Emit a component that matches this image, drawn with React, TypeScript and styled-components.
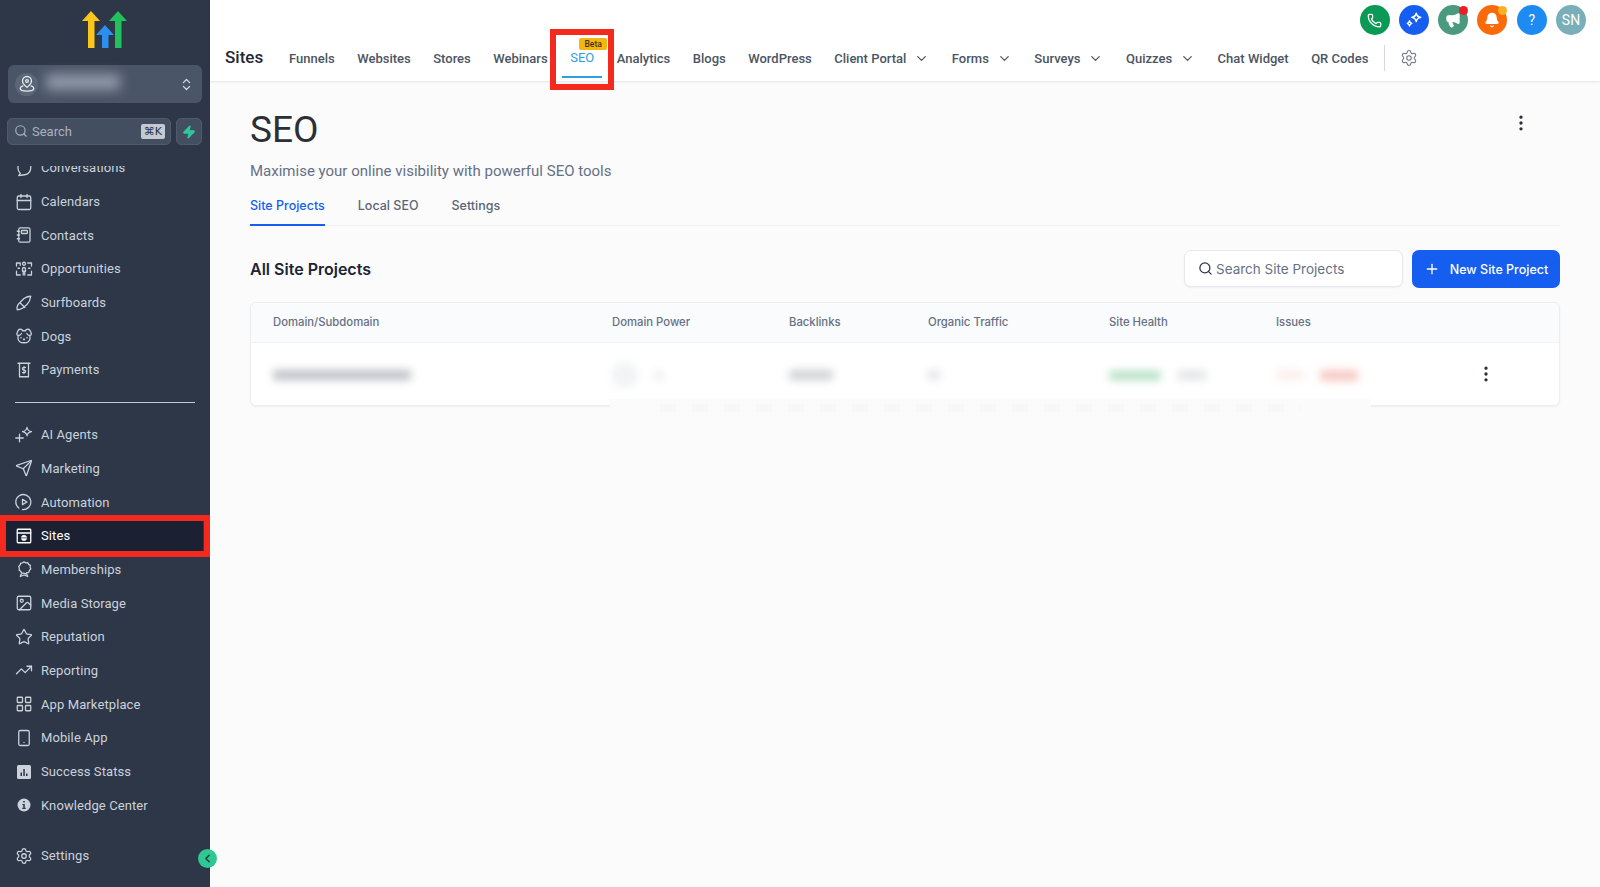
import React from "react";
import styled, { createGlobalStyle } from "styled-components";
import {
  Calendar,
  ChevronDown,
  ChevronLeft,
  ChevronsUpDown,
  EllipsisVertical,
  Dog,
  Image,
  LayoutGrid,
  Megaphone,
  Phone,
  Plus,
  Search as SearchGlyph,
  Send,
  Settings,
  Smartphone,
  Star,
  TrendingUp,
  Bell,
  Zap,
} from "lucide-react";

const GlobalStyle = createGlobalStyle`
  * { box-sizing: border-box; }
  html, body { margin: 0; padding: 0; height: 100%; overflow: hidden; }
  body { font-family: Roboto, "Liberation Sans", sans-serif; background: #fbfbfc; }
`;

const Page = styled.div`
  display: flex;
  width: 1600px;
  height: 887px;
  overflow: hidden;
`;

/* sidebar */
const Sidebar = styled.aside`
  position: relative;
  flex: 0 0 210px;
  display: flex;
  flex-direction: column;
  background: #2d3748;
  color: #cbd2dc;
`;

const LogoWrap = styled.div`
  display: flex;
  justify-content: center;
  padding-top: 11px;
  height: 65px;
`;

const AccountBox = styled.div`
  display: flex;
  align-items: center;
  margin: 0 8px;
  height: 38px;
  padding: 0 7px;
  background: #4a5567;
  border-radius: 6px;
`;

const AccountAvatar = styled.div`
  width: 23px;
  height: 23px;
  flex: none;
  border-radius: 50%;
  background: #5b6677;
  display: flex;
  align-items: center;
  justify-content: center;
  color: #e6e9ee;
`;

const BlurredName = styled.div`
  width: 74px;
  height: 16px;
  margin: 0 0 5px 8px;
  background: #8f98a6;
  filter: blur(6px);
  flex: none;
`;

const AccountArrows = styled.div`
  margin-left: auto;
  margin-right: 1px;
  display: flex;
  color: #d5dae1;
`;

const SearchRow = styled.div`
  display: flex;
  gap: 5px;
  margin: 15px 8px 0 7px;
  height: 27px;
`;

const SearchBox = styled.div`
  flex: 1;
  display: flex;
  align-items: center;
  gap: 4px;
  padding: 0 5px 1px 6px;
  background: #434e60;
  border: 1px solid #4f5a6b;
  border-radius: 5px;
  color: #aab2bf;
  font-size: 13px;
`;

const Kbd = styled.span`
  margin-left: auto;
  background: #c4c9d2;
  color: #2d3748;
  border-radius: 2px;
  padding: 0 3px;
  height: 15px;
  line-height: 15px;
  font-size: 11px;
  font-family: "DejaVu Sans", sans-serif;
`;

const BoltButton = styled.div`
  width: 26px;
  display: flex;
  align-items: center;
  justify-content: center;
  background: #434e60;
  border: 1px solid #4f5a6b;
  border-radius: 5px;
  color: #2fc79a;
`;

const MenuClip = styled.nav`
  flex: 1;
  margin-top: 21px;
  overflow: hidden;
  display: flex;
  flex-direction: column;
`;

const MenuList = styled.div`
  margin-top: -15px;
  flex: 1;
  display: flex;
  flex-direction: column;
`;

const MenuRow = styled.div<{ $active?: boolean }>`
  position: relative;
  display: flex;
  align-items: center;
  flex: none;
  height: 33.7px;
  margin: 0 7px 0 6px;
  padding-left: 9px;
  gap: 8px;
  font-size: 13px;
  letter-spacing: 0.1px;
  color: ${(p) => (p.$active ? "#ffffff" : "#cbd2dc")};
  background: ${(p) => (p.$active ? "#1b2132" : "transparent")};
`;

const MenuIcon = styled.span`
  width: 18px;
  height: 18px;
  flex: none;
  display: flex;
  align-items: center;
  justify-content: center;
`;

const MenuDivider = styled.hr`
  flex: none;
  width: 180px;
  height: 1px;
  margin: 15px 0 15px 15px;
  border: none;
  background: #c3cad4;
`;

const SettingsRow = styled(MenuRow)`
  margin-top: 17px;
`;

const Annotation = styled.span<{ $wide?: boolean }>`
  position: absolute;
  border: ${(p) => (p.$wide ? "6.5px" : "6px")} solid #f32a1d;
  pointer-events: none;
  z-index: 5;
`;

const SitesAnnotation = styled(Annotation)`
  inset: -3.5px -7px -4px -6px;
`;

const SeoAnnotation = styled(Annotation)`
  top: -6px;
  bottom: -9px;
  left: -12px;
  right: -12px;
`;

const CollapseButton = styled.div`
  position: absolute;
  left: 198px;
  top: 849px;
  width: 19px;
  height: 19px;
  border-radius: 50%;
  background: #2fc794;
  color: #24413f;
  display: flex;
  align-items: center;
  justify-content: center;
  z-index: 6;
`;

/* main */
const Main = styled.main`
  flex: 1;
  min-width: 0;
  display: flex;
  flex-direction: column;
`;

const Header = styled.header`
  height: 81px;
  flex: none;
  padding-top: 5px;
  background: #ffffff;
  box-shadow: 0 1px 2px rgba(16, 24, 40, 0.1);
  position: relative;
  z-index: 2;
`;

const TopActions = styled.div`
  display: flex;
  justify-content: flex-end;
  gap: 9.3px;
  height: 30px;
  padding-right: 14px;
`;

const RoundAction = styled.div<{ $bg: string }>`
  position: relative;
  width: 30px;
  height: 30px;
  border-radius: 50%;
  background: ${(p) => p.$bg};
  color: #ffffff;
  display: flex;
  align-items: center;
  justify-content: center;
  font-size: 14px;
`;

const Dot = styled.span<{ $color: string }>`
  position: absolute;
  top: 1px;
  right: 0;
  width: 9px;
  height: 9px;
  border-radius: 50%;
  background: ${(p) => p.$color};
`;

const NavRow = styled.div`
  display: flex;
  align-items: center;
  height: 46px;
  padding-left: 15px;
`;

const NavTitle = styled.div`
  font-size: 17px;
  font-weight: 500;
  color: #1f2937;
  width: 64px;
  flex: none;
  margin-bottom: 2px;
`;

const NavLinks = styled.div`
  display: flex;
  align-items: stretch;
  align-self: stretch;
  gap: 22.5px;
`;

const NavLink = styled.div`
  display: flex;
  align-items: center;
  gap: 8px;
  font-size: 13px;
  font-weight: 500;
  color: #4b5563;
  white-space: nowrap;
`;

const SeoLink = styled(NavLink)`
  position: relative;
  padding: 0 8px 2px;
  margin: 0 -8px;
  color: #2f9fe0;
  font-weight: 400;

  &::after {
    content: "";
    position: absolute;
    left: 0;
    right: 0;
    bottom: 3px;
    height: 2px;
    background: #2f9fe0;
  }
`;

const BetaBadge = styled.span`
  position: absolute;
  top: 3px;
  left: 17px;
  width: 28px;
  height: 12px;
  border-radius: 2px;
  background: #f5b40f;
  color: #3d3415;
  font-size: 8.5px;
  font-weight: 500;
  line-height: 12px;
  text-align: center;
`;

const NavSeparator = styled.div`
  width: 1px;
  height: 26px;
  margin-left: 16px;
  background: #d5d8dd;
`;

const NavGear = styled.div`
  margin-left: 15px;
  color: #6b7280;
  display: flex;
`;

const Content = styled.div`
  flex: 1;
  padding: 0 40px;
  position: relative;
`;

const TitleBlock = styled.div`
  position: relative;
  padding-top: 27px;
`;

const PageTitle = styled.h1`
  margin: 0;
  font-size: 37px;
  line-height: 44px;
  font-weight: 400;
  color: #2b2f36;
`;

const PageMenu = styled.div`
  position: absolute;
  top: 32px;
  right: 29px;
  color: #2b2f36;
  display: flex;
`;

const Subtitle = styled.p`
  margin: 9px 0 0;
  font-size: 15px;
  line-height: 20px;
  color: #667085;
`;

const Tabs = styled.div`
  display: flex;
  gap: 33px;
  margin-top: 8px;
  border-bottom: 1px solid #f0f1f3;
  height: 37px;
`;

const Tab = styled.div<{ $active?: boolean }>`
  height: 37px;
  padding-top: 9px;
  font-family: Inter, sans-serif;
  font-size: 12.5px;
  font-weight: 500;
  color: ${(p) => (p.$active ? "#155eef" : "#5c6675")};
  border-bottom: ${(p) => (p.$active ? "2px solid #155eef" : "none")};
`;

const SectionBar = styled.div`
  display: flex;
  align-items: center;
  justify-content: space-between;
  margin-top: 24px;
  height: 38px;
`;

const SectionTitle = styled.h2`
  margin: 0;
  font-family: Inter, sans-serif;
  font-size: 16px;
  font-weight: 600;
  color: #1d2433;
`;

const SectionActions = styled.div`
  display: flex;
  gap: 9px;
`;

const SearchField = styled.div`
  width: 219px;
  height: 37px;
  display: flex;
  align-items: center;
  gap: 3px;
  padding: 0 13px;
  background: #fff;
  border: 1px solid #e7e9ec;
  border-radius: 7px;
  box-shadow: 0 1px 2px rgba(16, 24, 40, 0.05);
  color: #667085;
  font-family: Inter, sans-serif;
  font-size: 13.5px;
`;

const PrimaryButton = styled.div`
  width: 148px;
  height: 38px;
  display: flex;
  align-items: center;
  justify-content: center;
  gap: 10px;
  background: #155eef;
  border-radius: 7px;
  color: #fff;
  font-family: Inter, sans-serif;
  font-size: 12.5px;
  font-weight: 500;
`;

const TableCard = styled.div`
  position: relative;
  margin-top: 14px;
  background: #fff;
  border: 1px solid #eceef1;
  border-radius: 6px;
  box-shadow: 0 1px 2px rgba(16, 24, 40, 0.05);
`;

const TableGrid = styled.div`
  display: grid;
  grid-template-columns: 339px 177px 139px 181px 167px 1fr;
  align-items: center;
  padding-left: 22px;
`;

const TableHead = styled(TableGrid)`
  height: 40px;
  padding-bottom: 2px;
  background: #f9fbfc;
  border-bottom: 1px solid #f0f1f4;
  border-radius: 6px 6px 0 0;
  font-family: Inter, sans-serif;
  font-size: 11.3px;
  font-weight: 500;
  color: #667085;
`;

const TableRow = styled(TableGrid)`
  height: 62px;
  padding-top: 2px;
`;

const Cell = styled.div`
  display: flex;
  align-items: center;
  gap: 16px;
`;

const Smudge = styled.span<{ $w: number; $h?: number; $c: string; $r?: number }>`
  display: block;
  flex: none;
  width: ${(p) => p.$w}px;
  height: ${(p) => p.$h ?? 9}px;
  background: ${(p) => p.$c};
  border-radius: ${(p) => p.$r ?? 3}px;
  filter: blur(4px);
`;

const RowMenu = styled.div`
  position: absolute;
  right: 63px;
  bottom: 21px;
  color: #2b2f36;
  display: flex;
`;

const Fade = styled.div`
  position: absolute;
  left: 359px;
  right: 188px;
  bottom: -7px;
  height: 13px;
  background: #fbfbfc;

  &::after {
    content: "";
    position: absolute;
    left: 50px;
    right: 70px;
    top: 5px;
    height: 8px;
    background: repeating-linear-gradient(90deg, #f7f7f8 0 16px, transparent 16px 32px);
  }
`;

const Stroke = styled.svg.attrs({
  width: 18,
  height: 18,
  viewBox: "0 0 24 24",
  fill: "none",
  stroke: "currentColor",
  strokeWidth: 1.7,
  strokeLinecap: "round",
  strokeLinejoin: "round",
})``;

const Logo = () => (
  <svg width="46" height="38" viewBox="0 0 46 38">
    <path d="M0 10 9 0l9 10h-5.500v27H6V10z" fill="#fbc61b" />
    <path d="M14 24l9-10 9 10h-5.500v13H20V24z" fill="#2b8ff0" />
    <path d="M27 10l9-10 9 10h-5.500v27H33V10z" fill="#1fc25b" />
  </svg>
);

const LocationIcon = () => (
  <Stroke width={15} height={15} strokeWidth="2">
    <path d="M12 2a6 6 0 0 0-6 6c0 3.500 3 6 6 8.500 3-2.500 6-5 6-8.500a6 6 0 0 0-6-6z" />
    <circle cx="12" cy="8" r="1.800" />
    <path d="M6.500 14.500C4 15.300 3 16.500 3 18c0 2 4 3.500 9 3.500s9-1.500 9-3.500c0-1.500-1-2.700-3.500-3.500" />
  </Stroke>
);

const ChatIcon = () => (
  <Stroke>
    <path d="M4 3v9a9 9 0 0 0 3 7l-2 3 8-1a9 9 0 0 0 8-9V3" />
  </Stroke>
);

const NotebookIcon = () => (
  <Stroke>
    <rect x="5" y="2.500" width="15" height="19" rx="2" />
    <rect x="8.500" y="6" width="8" height="4" rx="1" />
    <path d="M3 7h3M3 12h3M3 17h3" />
  </Stroke>
);

const PeopleIcon = () => (
  <Stroke>
    <circle cx="12" cy="5" r="2" />
    <path d="M10 12a2 2 0 0 1 4 0v3h-4zM11 15v5M13 15v5" />
    <path d="M2 4h5v3M2 4v4M22 4h-5M22 4v4M2 15v5h5M22 15v5h-5M4 11h2M18 11h2" />
  </Stroke>
);

const BoardIcon = () => (
  <Stroke>
    <path d="M3 21c-1-3 0-6 3-9l6-6c3-2 6-3 9-3-.500 4-2 8-5 11l-6 5c-2 1-4 2-7 2z" />
    <path d="M7 12l6 6" />
  </Stroke>
);

const ReceiptIcon = () => (
  <Stroke>
    <path d="M4 3h16M6 3v18h12V3" />
    <path d="M14 8.500h-2.500a1.500 1.500 0 0 0 0 3.500h1a1.500 1.500 0 0 1 0 3.500H10M12 7v10" strokeWidth="1.400" />
  </Stroke>
);

const AgentIcon = () => (
  <Stroke>
    <path d="M16 2c.600 3.400 2 4.800 6 5.500-4 .700-5.400 2.100-6 5.500-.600-3.400-2-4.800-6-5.500 4-.700 5.400-2.100 6-5.500z" />
    <path d="M6 11v10M1 16h10" />
  </Stroke>
);

const AutomationIcon = () => (
  <Stroke>
    <path d="M5 20a10 10 0 1 1 5 2" />
    <path d="M10 8.500l6 3.500-6 3.500z" />
  </Stroke>
);

const SitesIcon = () => (
  <Stroke strokeWidth="2">
    <rect x="3" y="3" width="18" height="18" rx="1" strokeLinejoin="miter" />
    <path d="M3 8h18" />
    <circle cx="12" cy="14.500" r="3.500" fill="currentColor" strokeWidth="1" />
    <path d="M8.500 14.500h7" stroke="#1b2132" strokeWidth="1" />
  </Stroke>
);

const RosetteIcon = () => (
  <Stroke>
    <path d="M12 2.500l2.300 1.300 2.600-.300 1.300 2.300 2.300 1.300-.300 2.600.800 2.300-1.800 1.900-.800 2.500-2.600.500-2 1.700-2.300-1-2.600-.200-1.300-2.300-2.100-1.500.300-2.600-.800-2.500 1.800-1.900.800-2.500 2.600-.400z" />
    <path d="M8.500 18.500L7 22l5-2 5 2-1.500-3.500" />
  </Stroke>
);

const StatsIcon = () => (
  <svg width="14" height="14" viewBox="0 0 14 14">
    <rect width="14" height="14" rx="1.500" fill="#cbd2dc" />
    <path d="M3.500 7.500h1.500V11H3.500zM6.300 4h1.500v7H6.300zM9 8.500h1.500V11H9z" fill="#2d3748" />
  </svg>
);

const InfoIcon = () => (
  <svg width="14" height="14" viewBox="0 0 14 14">
    <circle cx="7" cy="7" r="6.500" fill="#cbd2dc" />
    <path d="M6.200 3h1.600v1.600H6.200zM5.500 6h2.300v3.800h.9V11H5.300V9.800h1V7.200h-.8z" fill="#2d3748" />
  </svg>
);

const SparkleIcon = () => (
  <svg width="18" height="18" viewBox="0 0 24 24" fill="none" stroke="#fff" strokeWidth="2" strokeLinejoin="round">
    <path d="M15 3c.600 3.400 2 4.800 6 5.500-4 .700-5.400 2.100-6 5.500-.600-3.400-2-4.800-6-5.500 4-.700 5.400-2.100 6-5.500z" />
    <path d="M6 13c.300 2 1.200 2.800 3 3.500-1.800.700-2.700 1.500-3 3.500-.300-2-1.200-2.800-3-3.500 1.800-.700 2.700-1.500 3-3.500z" />
  </svg>
);

const menuTop = [
  { label: "Conversations", icon: <ChatIcon /> },
  { label: "Calendars", icon: <Calendar size={18} strokeWidth={1.7} /> },
  { label: "Contacts", icon: <NotebookIcon /> },
  { label: "Opportunities", icon: <PeopleIcon /> },
  { label: "Surfboards", icon: <BoardIcon /> },
  { label: "Dogs", icon: <Dog size={18} strokeWidth={1.7} /> },
  { label: "Payments", icon: <ReceiptIcon /> },
];

const menuBottom = [
  { label: "AI Agents", icon: <AgentIcon /> },
  { label: "Marketing", icon: <Send size={18} strokeWidth={1.7} /> },
  { label: "Automation", icon: <AutomationIcon /> },
  { label: "Sites", icon: <SitesIcon />, active: true },
  { label: "Memberships", icon: <RosetteIcon /> },
  { label: "Media Storage", icon: <Image size={18} strokeWidth={1.7} /> },
  { label: "Reputation", icon: <Star size={18} strokeWidth={1.7} /> },
  { label: "Reporting", icon: <TrendingUp size={18} strokeWidth={1.7} /> },
  { label: "App Marketplace", icon: <LayoutGrid size={18} strokeWidth={1.7} /> },
  { label: "Mobile App", icon: <Smartphone size={18} strokeWidth={1.7} /> },
  { label: "Success Statss", icon: <StatsIcon /> },
  { label: "Knowledge Center", icon: <InfoIcon /> },
];

const navLinks: { label: string; caret?: boolean; seo?: boolean }[] = [
  { label: "Funnels" },
  { label: "Websites" },
  { label: "Stores" },
  { label: "Webinars" },
  { label: "SEO", seo: true },
  { label: "Analytics" },
  { label: "Blogs" },
  { label: "WordPress" },
  { label: "Client Portal", caret: true },
  { label: "Forms", caret: true },
  { label: "Surveys", caret: true },
  { label: "Quizzes", caret: true },
  { label: "Chat Widget" },
  { label: "QR Codes" },
];

const columns = ["Domain/Subdomain", "Domain Power", "Backlinks", "Organic Traffic", "Site Health", "Issues"];

const App = () => {
  return (
    <Page>
      <GlobalStyle />
      <Sidebar>
        <LogoWrap>
          <Logo />
        </LogoWrap>
        <AccountBox>
          <AccountAvatar>
            <LocationIcon />
          </AccountAvatar>
          <BlurredName />
          <AccountArrows>
            <ChevronsUpDown size={15} />
          </AccountArrows>
        </AccountBox>
        <SearchRow>
          <SearchBox>
            <SearchGlyph size={14} />
            Search
            <Kbd>⌘K</Kbd>
          </SearchBox>
          <BoltButton>
            <Zap size={14} fill="currentColor" />
          </BoltButton>
        </SearchRow>
        <MenuClip>
          <MenuList>
            {menuTop.map((item) => (
              <MenuRow key={item.label}>
                <MenuIcon>{item.icon}</MenuIcon>
                {item.label}
              </MenuRow>
            ))}
            <MenuDivider />
            {menuBottom.map((item) => (
              <MenuRow key={item.label} $active={item.active}>
                <MenuIcon>{item.icon}</MenuIcon>
                {item.label}
                {item.active && <SitesAnnotation />}
              </MenuRow>
            ))}
            <SettingsRow>
              <MenuIcon>
                <Settings size={18} strokeWidth={1.7} />
              </MenuIcon>
              Settings
            </SettingsRow>
          </MenuList>
        </MenuClip>
        <CollapseButton>
          <ChevronLeft size={13} strokeWidth={3} />
        </CollapseButton>
      </Sidebar>
      <Main>
        <Header>
          <TopActions>
            <RoundAction $bg="#0a9a55">
              <Phone size={15} />
            </RoundAction>
            <RoundAction $bg="#155eef">
              <SparkleIcon />
            </RoundAction>
            <RoundAction $bg="#4a9a80">
              <Megaphone size={16} fill="#fff" />
              <Dot $color="#ee1c25" />
            </RoundAction>
            <RoundAction $bg="#fb6a0a">
              <Bell size={16} fill="#fff" />
              <Dot $color="#fbb024" />
            </RoundAction>
            <RoundAction $bg="#1d8bf1">?</RoundAction>
            <RoundAction $bg="#7aaeb8">SN</RoundAction>
          </TopActions>
          <NavRow>
            <NavTitle>Sites</NavTitle>
            <NavLinks>
              {navLinks.map((link) =>
                link.seo ? (
                  <SeoLink key={link.label}>
                    {link.label}
                    <BetaBadge>Beta</BetaBadge>
                    <SeoAnnotation $wide />
                  </SeoLink>
                ) : (
                  <NavLink key={link.label}>
                    {link.label}
                    {link.caret && <ChevronDown size={15} strokeWidth={2} />}
                  </NavLink>
                )
              )}
            </NavLinks>
            <NavSeparator />
            <NavGear>
              <Settings size={18} strokeWidth={1.4} />
            </NavGear>
          </NavRow>
        </Header>
        <Content>
          <TitleBlock>
            <PageTitle>SEO</PageTitle>
            <PageMenu>
              <EllipsisVertical size={20} />
            </PageMenu>
            <Subtitle>Maximise your online visibility with powerful SEO tools</Subtitle>
          </TitleBlock>
          <Tabs>
            <Tab $active>Site Projects</Tab>
            <Tab>Local SEO</Tab>
            <Tab>Settings</Tab>
          </Tabs>
          <SectionBar>
            <SectionTitle>All Site Projects</SectionTitle>
            <SectionActions>
              <SearchField>
                <SearchGlyph size={15} color="#2b3445" />
                Search Site Projects
              </SearchField>
              <PrimaryButton>
                <Plus size={16} />
                New Site Project
              </PrimaryButton>
            </SectionActions>
          </SectionBar>
          <TableCard>
            <TableHead>
              {columns.map((c) => (
                <div key={c}>{c}</div>
              ))}
            </TableHead>
            <TableRow>
              <Cell>
                <Smudge $w={138} $h={10} $c="#bdc0c6" />
              </Cell>
              <Cell>
                <Smudge $w={26} $h={26} $c="#f2f3f4" $r={13} />
                <Smudge $w={10} $h={7} $c="#e8e9eb" />
              </Cell>
              <Cell>
                <Smudge $w={44} $h={10} $c="#cfd1d5" />
              </Cell>
              <Cell>
                <Smudge $w={12} $h={10} $c="#e2e3e6" />
              </Cell>
              <Cell>
                <Smudge $w={52} $h={9} $c="#b2dfc2" />
                <Smudge $w={30} $h={8} $c="#dfe0e3" />
              </Cell>
              <Cell>
                <Smudge $w={28} $h={10} $c="#fbeeec" />
                <Smudge $w={38} $h={11} $c="#f6c9c2" />
              </Cell>
            </TableRow>
            <RowMenu>
              <EllipsisVertical size={20} />
            </RowMenu>
            <Fade />
          </TableCard>
        </Content>
      </Main>
    </Page>
  );
};

export default App;
